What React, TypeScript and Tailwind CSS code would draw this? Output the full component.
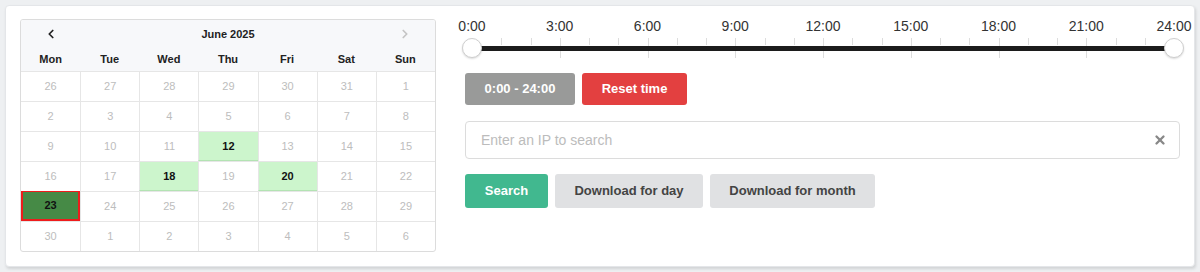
import { ChevronLeft, ChevronRight, X } from 'lucide-react';

const weekdays = ['Mon', 'Tue', 'Wed', 'Thu', 'Fri', 'Sat', 'Sun'];

const days = [
    26, 27, 28, 29, 30, 31, 1,
    2, 3, 4, 5, 6, 7, 8,
    9, 10, 11, 12, 13, 14, 15,
    16, 17, 18, 19, 20, 21, 22,
    23, 24, 25, 26, 27, 28, 29,
    30, 1, 2, 3, 4, 5, 6,
];

const marked = [12, 18, 20];
const hours = Array.from({ length: 25 }, (_, i) => i);
const labels = [0, 3, 6, 9, 12, 15, 18, 21, 24];

function Calendar() {
    return (
        <div className="w-[416px] shrink-0 -mt-[1px] self-start border border-[#dcdcdc] rounded-[3px] overflow-hidden text-[11px]">
            {/* header */}
            <div className="bg-[#f7f8fa]">
                <div className="grid grid-cols-7 h-[28px] items-center">
                    <div className="flex justify-center text-[#222]">
                        <ChevronLeft size={14} strokeWidth={3} />
                    </div>
                    <div className="col-span-5 text-center font-bold text-[#222]">June 2025</div>
                    <div className="flex justify-center text-[#c4c4c4]">
                        <ChevronRight size={14} strokeWidth={3} />
                    </div>
                </div>
                <div className="grid grid-cols-7 h-[23px] items-center pb-[1px]">
                    {weekdays.map((d) => (
                        <div key={d} className="text-center font-bold text-[#222]">{d}</div>
                    ))}
                </div>
            </div>

            {/* days */}
            <div className="grid grid-cols-7">
                {days.map((d, i) => {
                    const inMonth = i >= 6 && i < 36;
                    const isMarked = inMonth && marked.includes(d);
                    const isToday = inMonth && d === 23;
                    let cls = 'text-[#bdbdbd]';
                    if (isMarked) cls = 'bg-[#ccf5cc] text-[#111] font-bold border-b border-b-[#b3e3b3]';
                    if (isToday) cls = 'bg-[#468a46] text-[#111] font-bold border-2 border-[#ee1c1c]';
                    return (
                        <div
                            key={i}
                            className={`h-[30px] flex items-center justify-center border-t border-[#e6e6e6] ${i % 7 ? 'border-l' : ''} ${cls}`}
                        >
                            {d}
                        </div>
                    );
                })}
            </div>
        </div>
    );
}

function TimeSlider() {
    return (
        <div className="relative h-[40px] ml-[7px] mr-[6px]">
            {/* labels */}
            {labels.map((h) => (
                <span
                    key={h}
                    className="absolute -top-[2px] -translate-x-1/2 text-[14px] leading-[16px] text-[#333]"
                    style={{ left: `${(h / 24) * 100}%` }}
                >
                    {h}:00
                </span>
            ))}
            {/* ticks */}
            {hours.map((h) => (
                <span
                    key={h}
                    className={`absolute top-[18px] w-px bg-[#dddddd] ${h % 3 === 0 ? 'h-[20px]' : 'h-[7px]'}`}
                    style={{ left: `${(h / 24) * 100}%` }}
                />
            ))}
            {/* track */}
            <div className="absolute left-0 right-0 top-[26px] h-[5px] bg-[#1c1c1c]" />
            {/* handles */}
            <div className="absolute top-[18px] -left-[10px] w-[20px] h-[20px] rounded-full bg-white border border-[#cfcfcf] shadow-[0_1px_2px_rgba(0,0,0,0.15)]" />
            <div className="absolute top-[18px] -right-[10px] w-[20px] h-[20px] rounded-full bg-white border border-[#cfcfcf] shadow-[0_1px_2px_rgba(0,0,0,0.15)]" />
        </div>
    );
}

export default function App() {
    return (
        <div className="w-[1200px] h-[272px] bg-[#eef0f2] p-[5px]" style={{ fontFamily: '"Liberation Sans", Arial, sans-serif' }}>
            <div className="h-[262px] bg-white border border-[#e4e6e9] rounded-[4px] shadow-[1px_2px_3px_rgba(0,0,0,0.12)] p-[14px] flex gap-[29px]">
                <Calendar />

                <div className="flex-1 flex flex-col">
                    <TimeSlider />

                    <div className="flex gap-[7px] mt-[13px]">
                        <button className="h-[32px] w-[110px] rounded-[3px] bg-[#999a99] text-white font-bold text-[13px]">
                            0:00 - 24:00
                        </button>
                        <button className="h-[32px] w-[105px] rounded-[3px] bg-[#e34040] text-white font-bold text-[13px]">
                            Reset time
                        </button>
                    </div>

                    <div className="mt-[16px] h-[38px] border border-[#dcdcdc] rounded-[4px] flex items-center pl-[15px] pr-[12px]">
                        <input
                            className="flex-1 outline-none text-[14px] placeholder:text-[#bcbcbc]"
                            placeholder="Enter an IP to search"
                        />
                        <X size={14} strokeWidth={4} className="text-[#888]" />
                    </div>

                    <div className="flex gap-[7px] mt-[15px]">
                        <button className="h-[34px] w-[83px] rounded-[3px] bg-[#41b88f] text-white font-bold text-[13px]">
                            Search
                        </button>
                        <button className="h-[34px] w-[148px] rounded-[3px] bg-[#e0e1e3] text-[#444] font-bold text-[13px]">
                            Download for day
                        </button>
                        <button className="h-[34px] w-[165px] rounded-[3px] bg-[#e0e1e3] text-[#444] font-bold text-[13px]">
                            Download for month
                        </button>
                    </div>
                </div>
            </div>
        </div>
    );
}
